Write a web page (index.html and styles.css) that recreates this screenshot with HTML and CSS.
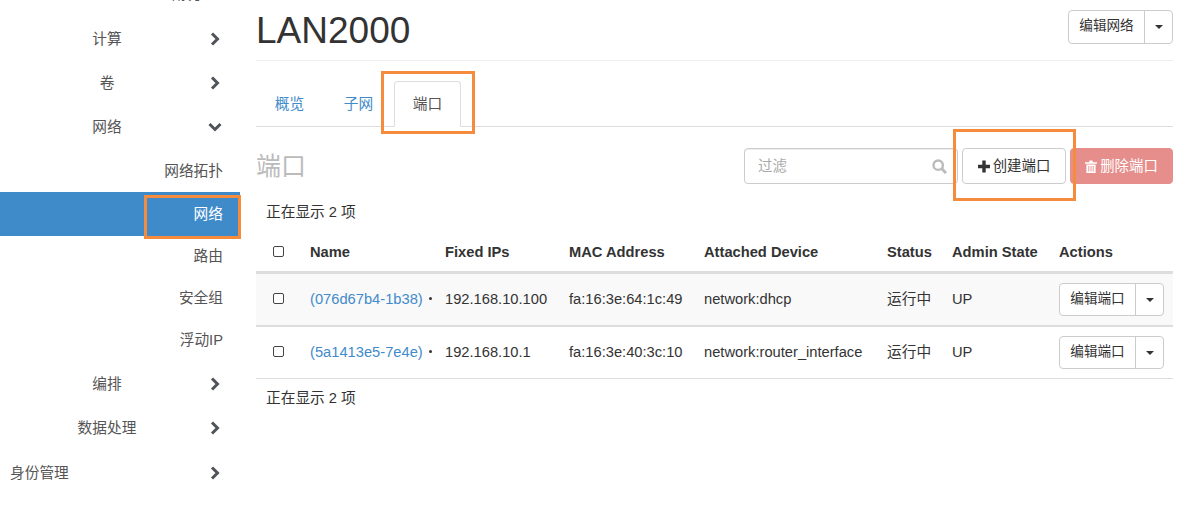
FILE: index.html
```html
<!DOCTYPE html>
<html lang="zh-CN">
<head>
<meta charset="utf-8">
<title>LAN2000</title>
<link rel="stylesheet" href="styles.css">
</head>
<body>
<svg class="defs" width="0" height="0" aria-hidden="true">
  <symbol id="right" viewBox="0 0 12 14"><path d="M3 1.5 8.5 7 3 12.5" fill="none" stroke="currentColor" stroke-width="3"/></symbol>
  <symbol id="down" viewBox="0 0 14 12"><path d="M1.5 3 7 8.5 12.5 3" fill="none" stroke="currentColor" stroke-width="3"/></symbol>
</svg>
<div class="page">
  <nav class="side">
    <ul class="menu">
      <li class="item sub cut"><span>概况</span></li>
      <li class="item top"><span class="lbl">计算</span><svg class="chev"><use href="#right"/></svg></li>
      <li class="item top"><span class="lbl">卷</span><svg class="chev"><use href="#right"/></svg></li>
      <li class="item top"><span class="lbl">网络</span><svg class="chev wide"><use href="#down"/></svg></li>
      <li class="item sub first"><span>网络拓扑</span></li>
      <li class="item sub active"><span>网络</span></li>
      <li class="item sub tight"><span>路由</span></li>
      <li class="item sub tight"><span>安全组</span></li>
      <li class="item sub tight"><span>浮动IP</span></li>
      <li class="item top"><span class="lbl">编排</span><svg class="chev"><use href="#right"/></svg></li>
      <li class="item top"><span class="lbl">数据处理</span><svg class="chev"><use href="#right"/></svg></li>
      <li class="item top left"><span class="lbl">身份管理</span><svg class="chev"><use href="#right"/></svg></li>
    </ul>
  </nav>
  <main class="main">
    <header class="head">
      <h1 class="title">LAN2000</h1>
      <div class="split big"><button class="btn-main">编辑网络</button><button class="btn-caret"><i class="caret"></i></button></div>
    </header>
    <ul class="tabs">
      <li class="tab">概览</li>
      <li class="tab">子网</li>
      <li class="tab on">端口</li>
    </ul>
    <div class="tools">
      <h2 class="sub-title">端口</h2>
      <div class="filter">
        <span class="ph">过滤</span>
        <svg class="search" viewBox="0 0 15 15"><circle cx="6.2" cy="6.2" r="4.7" fill="none" stroke="currentColor" stroke-width="2.4"/><path d="M9.8 9.8l4.2 4.2" stroke="currentColor" stroke-width="3"/></svg>
      </div>
      <button class="act create"><svg class="ico" viewBox="0 0 12 12"><path d="M6 0v12M0 6h12" stroke="currentColor" stroke-width="3.4"/></svg>创建端口</button>
      <button class="act del"><svg class="ico" viewBox="0 0 12 13"><path d="M0 2.2h12v1.6H0zM4 2.5 4.6.6h2.8L8 2.5zM1.4 4.6h9.2V13H1.4z" fill="currentColor"/><path d="M3.8 6v5.5M6 6v5.5M8.2 6v5.5" stroke="#e58e8c" stroke-width=".9"/></svg>删除端口</button>
    </div>
    <p class="count">正在显示 2 项</p>
    <table class="grid">
      <colgroup><col class="c1"><col class="c2"><col class="c3"><col class="c4"><col class="c5"><col class="c6"><col class="c7"><col class="c8"></colgroup>
      <thead>
        <tr><th><i class="check"></i></th><th>Name</th><th>Fixed IPs</th><th>MAC Address</th><th>Attached Device</th><th>Status</th><th>Admin State</th><th>Actions</th></tr>
      </thead>
      <tbody>
        <tr class="odd">
          <td><i class="check"></i></td><td class="name"><a>(076d67b4-1b38)</a></td><td><i class="dot"></i>192.168.10.100</td><td>fa:16:3e:64:1c:49</td><td>network:dhcp</td><td>运行中</td><td>UP</td>
          <td class="ops"><div class="split"><button class="btn-main">编辑端口</button><button class="btn-caret"><i class="caret"></i></button></div></td>
        </tr>
        <tr>
          <td><i class="check"></i></td><td class="name"><a>(5a1413e5-7e4e)</a></td><td><i class="dot"></i>192.168.10.1</td><td>fa:16:3e:40:3c:10</td><td>network:router_interface</td><td>运行中</td><td>UP</td>
          <td class="ops"><div class="split"><button class="btn-main">编辑端口</button><button class="btn-caret"><i class="caret"></i></button></div></td>
        </tr>
      </tbody>
    </table>
    <p class="count foot">正在显示 2 项</p>
  </main>
</div>
<div class="mark mark-nav"></div>
<div class="mark mark-tab"></div>
<div class="mark mark-create"></div>
</body>
</html>
```
FILE: styles.css
```css
* { box-sizing: border-box; }
html, body { margin: 0; height: 507px; overflow: hidden; }
body { background: #fff; color: #333; font: 14.7px/20px "Liberation Sans", "Noto Sans CJK SC", sans-serif; position: relative; }
.defs { position: absolute; }
.page { display: flex; height: 507px; }
.side { width: 240px; flex: none; color: #555; overflow: hidden; }
.menu { list-style: none; margin: -27px 0 0; padding: 0; }
.item { height: 44px; display: flex; align-items: center; position: relative; }
.item.first { height: 43px; }
.item.tight { height: 42px; padding-bottom: 3px; }
.item.cut { padding: 0 40px 3px 0; }
.top .lbl { width: 214px; text-align: center; }
.top.left { margin-top: 1px; }
.top.left .lbl { margin-left: 10px; width: 204px; text-align: left; }
.chev { width: 12px; height: 14px; margin-left: -5px; color: #50535a; flex: none; }
.chev.wide { width: 14px; height: 12px; margin-left: -6px; }
.sub { justify-content: flex-end; padding-right: 17px; }
.active { background: #3f8bca; color: #fff; height: 44px; }
.main { width: 917px; margin-left: 16px; flex: none; }
.head { height: 61px; border-bottom: 1px solid #eee; display: flex; justify-content: space-between; padding-top: 10px; }
.title { margin: 1px 0 0 0; font-size: 37px; line-height: 40px; font-weight: 400; color: #333; }
.split { display: flex; height: 33px; width: 105px; border: 1px solid #ccc; border-radius: 4px; background: #fff; }
.split.big { height: 34px; }
.split button { background: none; border: 0; padding: 0; font: inherit; font-size: 13.6px; color: #333; display: flex; align-items: center; justify-content: center; }
.split .btn-main { flex: 1; padding-bottom: 2px; }
.btn-caret { width: 28px; border-left: 1px solid #ccc !important; }
.caret { width: 0; height: 0; border-left: 4px solid transparent; border-right: 4px solid transparent; border-top: 4px solid #333; }
.tabs { list-style: none; margin: 20px 0 0; padding: 0; height: 46px; display: flex; gap: 2px; border-bottom: 1px solid #ddd; }
.tab { width: 67px; height: 46px; display: flex; align-items: center; justify-content: center; color: #428bca; }
.tab.on { color: #555; background: #fff; border: 1px solid #ddd; border-bottom-color: #fff; border-radius: 4px 4px 0 0; }
.tools { display: flex; align-items: center; gap: 4px; margin-top: 21px; height: 36px; }
.sub-title { margin: 0 auto 0 0; font-size: 25px; line-height: 36px; font-weight: 400; color: #bbb; }
.filter { width: 214px; height: 36px; border: 1px solid #ccc; border-radius: 4px; display: flex; align-items: center; justify-content: space-between; padding: 0 10px 0 13px; box-shadow: inset 0 1px 1px rgba(0,0,0,.075); }
.ph { color: #aaa; font-size: 14.4px; }
.search { width: 15px; height: 15px; color: #bbb; }
.act { height: 36px; width: 104px; border-radius: 4px; font: inherit; font-size: 14.4px; display: flex; align-items: center; justify-content: center; gap: 3px; padding: 0; }
.create { background: #fff; border: 1px solid #ccc; color: #333; }
.del { width: 103px; background: #e58e8c; border: 1px solid #e58e8c; color: #fff; }
.ico { width: 12px; height: 13px; flex: none; }
.count { margin: 18px 0 0 10px; height: 20px; }
.foot { margin-top: 9px; }
.grid { margin-top: 12px; width: 917px; border-collapse: separate; border-spacing: 0; table-layout: fixed; }
.c1 { width: 44px; } .c2 { width: 135px; } .c3 { width: 124px; } .c4 { width: 135px; } .c5 { width: 183px; } .c6 { width: 65px; } .c7 { width: 107px; } .c8 { width: 124px; }
.grid th, .grid td { padding: 0 0 2px; text-align: left; white-space: nowrap; }
.grid td.ops { padding-bottom: 0; }
.grid th { height: 40px; font-weight: 700; border-bottom: 3px solid #ddd; }
.grid td { height: 53px; border-bottom: 2px solid #ddd; }
.grid tbody tr:last-child td { height: 52px; border-bottom-width: 1px; }
.odd td { background: #f9f9f9; }
.grid th:first-child, .grid td:first-child { padding-left: 17px; }
.grid th:nth-child(n+2), .grid td:nth-child(n+2) { padding-left: 10px; }
.name a { color: #428bca; }
.dot { display: inline-block; width: 3px; height: 3px; border-radius: 50%; background: #333; margin: 0 13px 2px -16px; vertical-align: middle; }
.check { display: block; width: 11px; height: 11px; border: 1px solid #444; border-radius: 2px; background: #fff; }
.mark { position: absolute; border: 3px solid #f58b3c; pointer-events: none; }
.mark-nav { left: 144px; top: 195px; width: 97px; height: 44px; }
.mark-tab { left: 381px; top: 71px; width: 94px; height: 63px; }
.mark-create { left: 953px; top: 129px; width: 123px; height: 72px; }
```
